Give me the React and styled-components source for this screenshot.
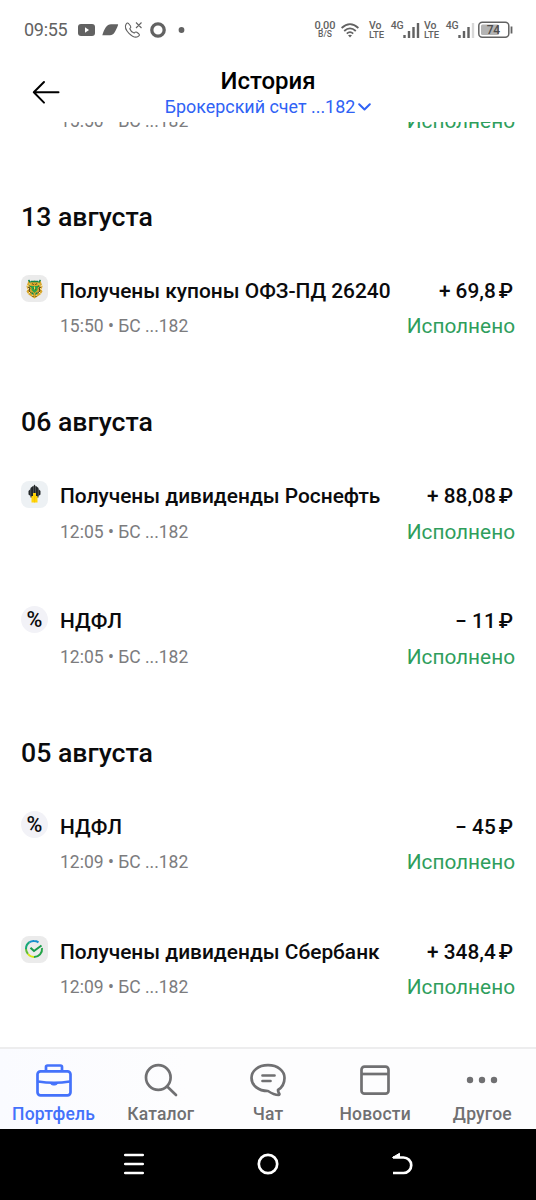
import React from "react";
import styled, { createGlobalStyle } from "styled-components";

const GlobalStyle = createGlobalStyle`
  * { box-sizing: border-box; }
  body { margin: 0; background: #fff; font-family: Roboto, "Noto Sans", sans-serif; }
  svg { display: block; flex: none; }
`;

const Screen = styled.div`
  width: 536px;
  height: 1200px;
  display: flex;
  flex-direction: column;
  overflow: hidden;
  background: #fff;
  color: #0b0b0d;
`;

const StatusBar = styled.div`
  height: 60px;
  flex: none;
  display: flex;
  align-items: center;
  justify-content: space-between;
  padding: 0 23px 0 24px;
  color: #626262;
`;

const Clock = styled.span`
  width: 54px;
  font-size: 18px;
  line-height: 22px;
  letter-spacing: -0.3px;
`;

const StatusGroup = styled.div`
  display: flex;
  align-items: center;
`;

const Stack = styled.div`
  width: ${(p) => p.$width}px;
  margin-right: ${(p) => p.$gap}px;
  display: flex;
  flex-direction: column;
  align-items: ${(p) => p.$align || "center"};
  font-weight: 500;
  white-space: nowrap;
`;

const Tiny = styled.span`
  font-size: ${(p) => p.$size}px;
  line-height: 9px;
  letter-spacing: ${(p) => p.$track || 0}px;
`;

const Header = styled.header`
  height: 62px;
  flex: none;
  display: grid;
  grid-template-columns: 92px 1fr 92px;
  align-items: start;
  padding-top: 6px;
`;

const BackButton = styled.button`
  margin: 13px 0 0 31px;
  padding: 0;
  border: 0;
  background: none;
  justify-self: start;
`;

const HeaderText = styled.div`
  display: flex;
  flex-direction: column;
  align-items: center;
`;

const Title = styled.h1`
  margin: 0;
  font-size: 24px;
  font-weight: 500;
  line-height: 30px;
  color: #000;
`;

const Account = styled.div`
  display: flex;
  align-items: center;
  gap: 3px;
  font-size: 17.9px;
  line-height: 22px;
  color: #2f62f5;
`;

const Scroll = styled.main`
  flex: 1;
  min-height: 0;
  overflow: hidden;
`;

const Feed = styled.div`
  margin-top: -65px;
`;

const DateHeading = styled.h2`
  height: 80.4px;
  margin: 0;
  padding: 19px 0 0 21px;
  font-size: 26.7px;
  font-weight: 500;
  line-height: 32px;
`;

const Row = styled.div`
  height: 125px;
  display: grid;
  grid-template-columns: 26px 1fr auto;
  column-gap: 13px;
  padding: 13px 21px 0 21px;
`;

const Lines = styled.div`
  display: flex;
  flex-direction: column;
  align-items: ${(p) => (p.$end ? "flex-end" : "flex-start")};
  padding-top: 0.4px;
  white-space: nowrap;
`;

const Name = styled.span`
  height: 30px;
  font-size: 20.9px;
  font-weight: 500;
  line-height: 30px;
`;

const Meta = styled.span`
  margin-top: 9.6px;
  font-size: 17.5px;
  line-height: 22px;
  color: #7c7c7e;
`;

const Amount = styled.span`
  height: 30px;
  margin-right: 2px;
  font-size: 20.8px;
  font-weight: 500;
  line-height: 30px;
`;

const Ruble = styled.span`
  margin-left: 3px;
`;

const State = styled.span`
  margin-top: 6.6px;
  font-size: 20.8px;
  line-height: 28px;
  color: #2f9e5c;
`;

const Badge = styled.div`
  width: 27px;
  height: 27px;
  display: flex;
  align-items: center;
  justify-content: center;
  border-radius: ${(p) => (p.$round ? "50%" : "8px")};
  background: ${(p) => p.$bg};
  font-size: 21.5px;
  font-weight: 500;
  line-height: 27px;
`;

const TabBar = styled.nav`
  height: 82px;
  flex: none;
  display: grid;
  grid-template-columns: repeat(5, 1fr);
  border-top: 2px solid #ededee;
  background: linear-gradient(90deg, #fafbff, #fdfdfe 35%, #fdfdfe);
`;

const Tab = styled.div`
  display: flex;
  flex-direction: column;
  align-items: center;
  padding-top: 12px;
  gap: 1px;
  color: ${(p) => (p.$active ? "#4472fb" : "#707072")};
  font-size: 17.5px;
  font-weight: 500;
  line-height: 24px;
  letter-spacing: 0.2px;
`;

const SystemNav = styled.div`
  height: 71px;
  flex: none;
  display: flex;
  align-items: center;
  justify-content: center;
  gap: 110px;
  padding-bottom: 1px;
  background: #000;
`;

function Coat() {
  return (
    <svg width="18" height="20" viewBox="0.500 0.500 18 20">
      <path d="M3 2l2 2 2-1 2-1 2 1 2 1 2-2 1 3 1 3-1 3 1 2-2 3-3 2-3 2-3-2-3-2-2-3 1-2-1-3 1-3z" fill="#d9a72b" />
      <path d="M1.500 7l2 1M1.500 11l2-1M3 15l2-2M16.500 7l-2 1M16.500 11l-2-1M15 15l-2-2M7 15v2M11 15v2" stroke="#fff4c8" strokeWidth=".9" />
      <path d="M3 1.500l2 2.500M15 1.500l-2 2.500M5.500 3h7M4 7l3 2M14 7l-3 2M6 14l2 2M12 14l-2 2" stroke="#14854b" strokeWidth="1.500" />
      <path d="M6 7.500h6v4l-3 3-3-3z" fill="#2fa347" />
      <path d="M2.500 8.500l2 1-1 3 2 1.500M15.500 8.500l-2 1 1 3-2 1.500M7 5l1 1.500M11 5l-1 1.500M8 9.500l2 2M7 18h1M10 18h1" stroke="#4d3f1b" strokeWidth="1" fill="none" />
      <path d="M9 8v3M4 5l1 2M13 5l1 2" stroke="#f5d54a" />
    </svg>
  );
}

function Rosneft() {
  return (
    <svg width="14" height="20" viewBox="0.500 0.500 14 20">
      <path d="M1 7.500l2-2v7l-2-1.500zM3 4.500l2.500-2v11.500h-2.500zM13 7.500l-2-2v7l2-1.500zM11 4.500l-2.500-2v11.500h2.500zM5.700 3L7 1l1.300 2v8h-2.600z" fill="#222628" />
      <path d="M3.200 5v8M10.800 5v8" stroke="#7b8084" strokeWidth=".5" />
      <path d="M4 12.500h1.500v-3h3v3h1.500v6.500h-6z" fill="#ffd408" />
      <path d="M7 13v6" stroke="#f4b800" strokeWidth=".6" />
    </svg>
  );
}

function Sber() {
  return (
    <svg width="19" height="19" viewBox="0.500 0.500 19 19" fill="none" strokeWidth="2">
      <path d="M5 2.700A8 8 0 0 1 9.500 1.500q2.500 0 4.500 1.300" stroke="#168fcb" />
      <path d="M5 2.700A8 8 0 0 0 1.500 9.500" stroke="#17a878" />
      <path d="M1.500 9.500A8 8 0 0 0 3.500 14.500" stroke="#62bd35" />
      <path d="M3.500 14.500A8 8 0 0 0 9.500 17.500" stroke="#d5e414" />
      <path d="M9.500 17.500A8 8 0 0 0 17.500 8.500" stroke="#22a447" />
      <path d="M6 8.200l3.500 3.300 7.500-5.500" stroke="#179a4a" />
    </svg>
  );
}

const badges = {
  coat: <Badge $bg="#ebebeb"><Coat /></Badge>,
  rosneft: <Badge $bg="#edf1f4"><Rosneft /></Badge>,
  sber: <Badge $bg="#ebebeb"><Sber /></Badge>,
  tax: <Badge $bg="#f2f2f7" $round>%</Badge>,
};

function Operation({ icon, name, time, amount }) {
  return (
    <Row>
      {badges[icon] || <span />}
      <Lines>
        <Name>{name}</Name>
        <Meta>{time} • БС ...182</Meta>
      </Lines>
      <Lines $end>
        <Amount>{amount}{amount && <Ruble>₽</Ruble>}</Amount>
        <State>Исполнено</State>
      </Lines>
    </Row>
  );
}

function Signal({ weak }) {
  return (
    <svg width="17" height="17" viewBox="0 0 17 17" strokeWidth="2.400" stroke="currentColor">
      <path d="M1.500 13v3M6 9v7M10.500 5v11" />
      <path d="M15 1v15" stroke={weak ? "#d8d8d8" : "currentColor"} />
    </svg>
  );
}

function Mobile({ weak, gap }) {
  return (
    <>
      <Stack $width={16} $gap={6} $align="flex-start">
        <Tiny $size={10.5}>Vo</Tiny>
        <Tiny $size={9.5}>LTE</Tiny>
      </Stack>
      <Stack $width={12} $gap={0}>
        <Tiny $size={10.5} $track={-0.4}>4G</Tiny>
        <Tiny $size={9}>&nbsp;</Tiny>
      </Stack>
      <Signal weak={weak} />
      <Stack $width={0} $gap={gap} />
    </>
  );
}

const tabs = [
  ["Портфель", (
    <svg key="i" width="40" height="40" viewBox="0 0 40 40" fill="none" stroke="currentColor" strokeWidth="2.700" strokeLinejoin="round">
      <rect x="3.500" y="10.300" width="33" height="24" rx="3" />
      <path d="M12 10V6q0-1.500 1.500-1.500h13Q28 4.500 28 6v4M4 20.500q16 2.500 32 0" />
      <path d="M16 22h8q-1 2-3 2h-2q-2 0-3-2z" fill="currentColor" strokeWidth="1" />
    </svg>
  )],
  ["Каталог", (
    <svg key="i" width="40" height="40" viewBox="0 0 40 40" fill="none" stroke="currentColor" strokeWidth="2.700" strokeLinecap="round">
      <circle cx="17.300" cy="16.500" r="12.300" />
      <path d="M26.200 25.500l8.800 8.500" />
    </svg>
  )],
  ["Чат", (
    <svg key="i" width="40" height="40" viewBox="0 0 40 40" fill="none" stroke="currentColor" strokeWidth="2.700" strokeLinecap="round" strokeLinejoin="round">
      <path d="M20 4.200C10 4.200 3.500 10 3.500 17S10 30 20 30c3 2 6.500 4 10.500 4 1 0 1.200-1 .5-1.800-.8-1-1-2-1-3.200 4-2.500 6.500-7 6.500-12C36.500 10 30 4.200 20 4.200z" />
      <path d="M14.500 14.500h12M14.500 20h8" />
    </svg>
  )],
  ["Новости", (
    <svg key="i" width="40" height="40" viewBox="0 0 40 40" fill="none" stroke="currentColor" strokeWidth="2.700">
      <rect x="6.500" y="5.700" width="27" height="27" rx="3" />
      <path d="M7 13h26" />
    </svg>
  )],
  ["Другое", (
    <svg key="i" width="40" height="40" viewBox="0 0 40 40" fill="currentColor">
      <circle cx="8" cy="19" r="3.200" />
      <circle cx="20" cy="19" r="3.200" />
      <circle cx="32" cy="19" r="3.200" />
    </svg>
  )],
];

export default function App() {
  return (
    <Screen>
      <GlobalStyle />
      <StatusBar>
        <StatusGroup>
          <Clock>09:55</Clock>
          <svg width="112" height="20" viewBox="78 20 112 20" fill="none" stroke="currentColor">
            <rect x="78" y="24" width="17" height="12" rx="3" fill="currentColor" stroke="none" />
            <path d="M85 27.300v5.400l4-2.700z" fill="#fff" stroke="none" />
            <path d="M102.300 35.200c2-6.500 4.500-11 8.700-11h6.500c.6 0 .8.400.5 1-2.500 6-4 10-8 10z" fill="currentColor" stroke="none" />
            <path d="M128.500 23.500c-1-1-1.500-.5-2.500.8-1.200 2.200 0 6 3 9 3.200 3.200 6.800 4.500 9 3.200 1.800-1.200 1.800-1.800.8-2.700l-2-1.500c-1-.7-1.500-.4-2.700.8-1.500-.5-3.700-2.700-4.300-4.400 1.200-1 1.400-1.700.7-2.700zM136 22.500l5.500 5.500M141.500 22.500l-5.500 5.500" strokeWidth="1.100" strokeLinejoin="round" />
            <circle cx="158" cy="30" r="6.200" strokeWidth="3.300" />
            <circle cx="181.500" cy="30" r="2.900" fill="currentColor" stroke="none" />
          </svg>
        </StatusGroup>
        <StatusGroup>
          <Stack $width={22} $gap={5}>
            <Tiny $size={11}>0,00</Tiny>
            <Tiny $size={8.5}>B/S</Tiny>
          </Stack>
          <svg width="18" height="15" viewBox="0 0 18 15" fill="none" stroke="currentColor" strokeWidth="1.800">
            <path d="M.6 5Q9-2.800 17.400 5M3.200 8Q9 2.800 14.800 8M5.800 10.700Q9 7.600 12.200 10.700" />
            <path d="M7 12.300q2-1.200 4 0L9 14.600z" fill="currentColor" stroke="none" />
          </svg>
          <Stack $width={0} $gap={10} />
          <Mobile gap={4} />
          <Mobile gap={3} weak />
          <svg width="35" height="18" viewBox="0 0 35 18">
            <rect x=".8" y="1.300" width="30" height="15" rx="3.500" fill="none" stroke="currentColor" strokeWidth="1.500" />
            <rect x="3" y="3.500" width="18" height="10.500" rx="1.500" fill="#b3b3b3" />
            <path d="M33.500 5.500v7" stroke="currentColor" strokeWidth="1.800" />
            <text x="15.200" y="13" textAnchor="middle" fontSize="12" fontWeight="500" letterSpacing="-.4" fill="#4c4c4c">74</text>
          </svg>
        </StatusGroup>
      </StatusBar>
      <Header>
        <BackButton aria-label="Назад">
          <svg width="30" height="26" viewBox="0 0 30 26" fill="none" stroke="#000" strokeWidth="2" strokeLinecap="round" strokeLinejoin="round">
            <path d="M27.500 13.300H2.800M13 3L2.800 13.300 13 23.600" />
          </svg>
        </BackButton>
        <HeaderText>
          <Title>История</Title>
          <Account>
            Брокерский счет ...182
            <svg width="13" height="8" viewBox="0 0 13 8" fill="none" stroke="currentColor" strokeWidth="2" strokeLinecap="round" strokeLinejoin="round">
              <path d="M1.200 1.200l5.300 5.300 5.300-5.300" />
            </svg>
          </Account>
        </HeaderText>
      </Header>
      <Scroll>
        <Feed>
          <Operation time="15:50" />
          <DateHeading>13 августа</DateHeading>
          <Operation icon="coat" name="Получены купоны ОФЗ-ПД 26240" time="15:50" amount="+ 69,8" />
          <DateHeading>06 августа</DateHeading>
          <Operation icon="rosneft" name="Получены дивиденды Роснефть" time="12:05" amount="+ 88,08" />
          <Operation icon="tax" name="НДФЛ" time="12:05" amount="− 11" />
          <DateHeading>05 августа</DateHeading>
          <Operation icon="tax" name="НДФЛ" time="12:09" amount="− 45" />
          <Operation icon="sber" name="Получены дивиденды Сбербанк" time="12:09" amount="+ 348,4" />
        </Feed>
      </Scroll>
      <TabBar>
        {tabs.map(([label, icon], i) => (
          <Tab key={label} $active={i === 0}>
            {icon}
            {label}
          </Tab>
        ))}
      </TabBar>
      <SystemNav>
        <svg width="24" height="24" viewBox="0 0 24 24" stroke="#fff" strokeWidth="2.700" strokeLinecap="round">
          <path d="M3.300 3h17.400M3.300 12h17.400M3.300 21h17.400" />
        </svg>
        <svg width="24" height="24" viewBox="0 0 24 24" fill="none" stroke="#fff" strokeWidth="2.700">
          <circle cx="12" cy="12" r="9.200" />
        </svg>
        <svg width="24" height="24" viewBox="0 0 24 24" fill="none" stroke="#fff" strokeWidth="2.700">
          <path d="M3 5.500h10.500a7.700 7.700 0 0 1 0 15.500H3" />
          <path d="M2.500 5.500L9.500 1.300v4z" fill="#fff" strokeWidth="1" />
        </svg>
      </SystemNav>
    </Screen>
  );
}
